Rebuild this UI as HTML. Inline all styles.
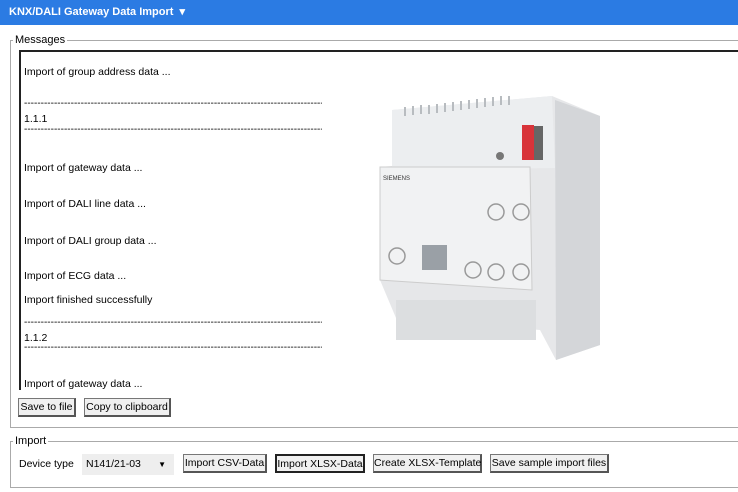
<!DOCTYPE html>
<html><head><style>
body{margin:0;width:738px;height:492px;background:#fff;font-family:"Liberation Sans",sans-serif;font-size:11px;color:#000;position:relative;overflow:hidden}
.hdr{position:absolute;left:0;top:0;width:738px;height:25px;background:#2b7be3;color:#fff;font-weight:bold;font-size:11px;line-height:25px;padding-left:9px;box-sizing:border-box}
.fs{position:absolute;border:1px solid #aaa;border-right:none}
.lg{position:absolute;background:#fff;padding:0 2px;font-size:11px;line-height:12px}
.tb{position:absolute;left:19px;top:50px;width:730px;height:338px;border:2px solid #222;border-right:none;border-bottom:none;overflow:hidden}
.l{position:absolute;left:3px;white-space:nowrap;font-size:10.5px}
.d{position:absolute;left:3px;white-space:nowrap;font-size:10px;overflow:hidden;width:298px}
.btn{position:absolute;height:19px;border:1px solid #777;border-right:2px solid #555;border-bottom:2px solid #555;background:#f0f0f0;font-size:10.5px;line-height:17px;text-align:center;box-sizing:border-box;white-space:nowrap}
</style></head><body>
<div class="hdr">KNX/DALI Gateway Data Import &nbsp;▾</div>
<div class="fs" style="left:10px;top:40px;width:740px;height:386px"></div>
<div class="lg" style="left:13px;top:34px">Messages</div>
<div class="tb">
<div class="l" style="top:14px">Import of group address data ...</div>
<div class="d" style="top:46px">----------------------------------------------------------------------------------------------------</div>
<div class="l" style="top:61px">1.1.1</div>
<div class="d" style="top:72px">----------------------------------------------------------------------------------------------------</div>
<div class="l" style="top:110px">Import of gateway data ...</div>
<div class="l" style="top:146px">Import of DALI line data ...</div>
<div class="l" style="top:183px">Import of DALI group data ...</div>
<div class="l" style="top:218px">Import of ECG data ...</div>
<div class="l" style="top:242px">Import finished successfully</div>
<div class="d" style="top:265px">----------------------------------------------------------------------------------------------------</div>
<div class="l" style="top:280px">1.1.2</div>
<div class="d" style="top:290px">----------------------------------------------------------------------------------------------------</div>
<div class="l" style="top:326px">Import of gateway data ...</div>
</div>
<svg style="position:absolute;left:0;top:0" width="738" height="492">
<polygon points="392,110 552,96 600,116 600,345 556,360 540,330 396,318 380,280 380,167 392,166" fill="#e6e7e9"/>
<polygon points="555,100 600,116 600,345 556,360" fill="#d4d6d9"/>
<polygon points="392,110 552,96 555,168 392,170" fill="#eceef0"/>
<g stroke="#b8bcc0" stroke-width="2">
<line x1="405" y1="107" x2="405" y2="116"/><line x1="413" y1="106" x2="413" y2="115"/><line x1="421" y1="105" x2="421" y2="114"/><line x1="429" y1="105" x2="429" y2="114"/><line x1="437" y1="104" x2="437" y2="113"/><line x1="445" y1="103" x2="445" y2="112"/><line x1="453" y1="102" x2="453" y2="111"/><line x1="461" y1="101" x2="461" y2="110"/><line x1="469" y1="100" x2="469" y2="109"/><line x1="477" y1="99" x2="477" y2="108"/><line x1="485" y1="98" x2="485" y2="107"/><line x1="493" y1="97" x2="493" y2="106"/><line x1="501" y1="96" x2="501" y2="105"/><line x1="509" y1="96" x2="509" y2="105"/>
</g>
<polygon points="380,167 530,167 532,290 380,280" fill="#f1f2f3" stroke="#ccc"/>
<rect x="522" y="125" width="12" height="35" fill="#d8333a"/>
<rect x="534" y="126" width="9" height="34" fill="#666"/>
<circle cx="500" cy="156" r="4" fill="#777"/>
<rect x="422" y="245" width="25" height="25" fill="#9aa0a6"/>
<rect x="396" y="300" width="140" height="40" fill="#dcdee0"/>
<g fill="none" stroke="#999" stroke-width="1.5">
<circle cx="397" cy="256" r="8"/><circle cx="473" cy="270" r="8"/><circle cx="496" cy="272" r="8"/><circle cx="521" cy="272" r="8"/><circle cx="496" cy="212" r="8"/><circle cx="521" cy="212" r="8"/>
</g>
<text x="383" y="180" font-size="6" fill="#333" font-family="Liberation Sans">SIEMENS</text>
</svg>
<div class="btn" style="left:18px;top:398px;width:58px">Save to file</div>
<div class="btn" style="left:84px;top:398px;width:87px">Copy to clipboard</div>
<div class="fs" style="left:10px;top:441px;width:740px;height:45px"></div>
<div class="lg" style="left:13px;top:435px">Import</div>
<div style="position:absolute;left:19px;top:458px;font-size:10.5px">Device type</div>
<div style="position:absolute;left:82px;top:454px;width:92px;height:21px;background:#eee;font-size:10.5px;line-height:21px;padding-left:4px;box-sizing:border-box">N141/21-03 <span style="position:absolute;right:8px;font-size:8px">▼</span></div>
<div class="btn" style="left:183px;top:454px;width:84px">Import CSV-Data</div>
<div class="btn" style="left:275px;top:454px;width:90px;border:2px solid #222">Import XLSX-Data</div>
<div class="btn" style="left:373px;top:454px;width:109px">Create XLSX-Template</div>
<div class="btn" style="left:490px;top:454px;width:119px">Save sample import files</div>
</body></html>
